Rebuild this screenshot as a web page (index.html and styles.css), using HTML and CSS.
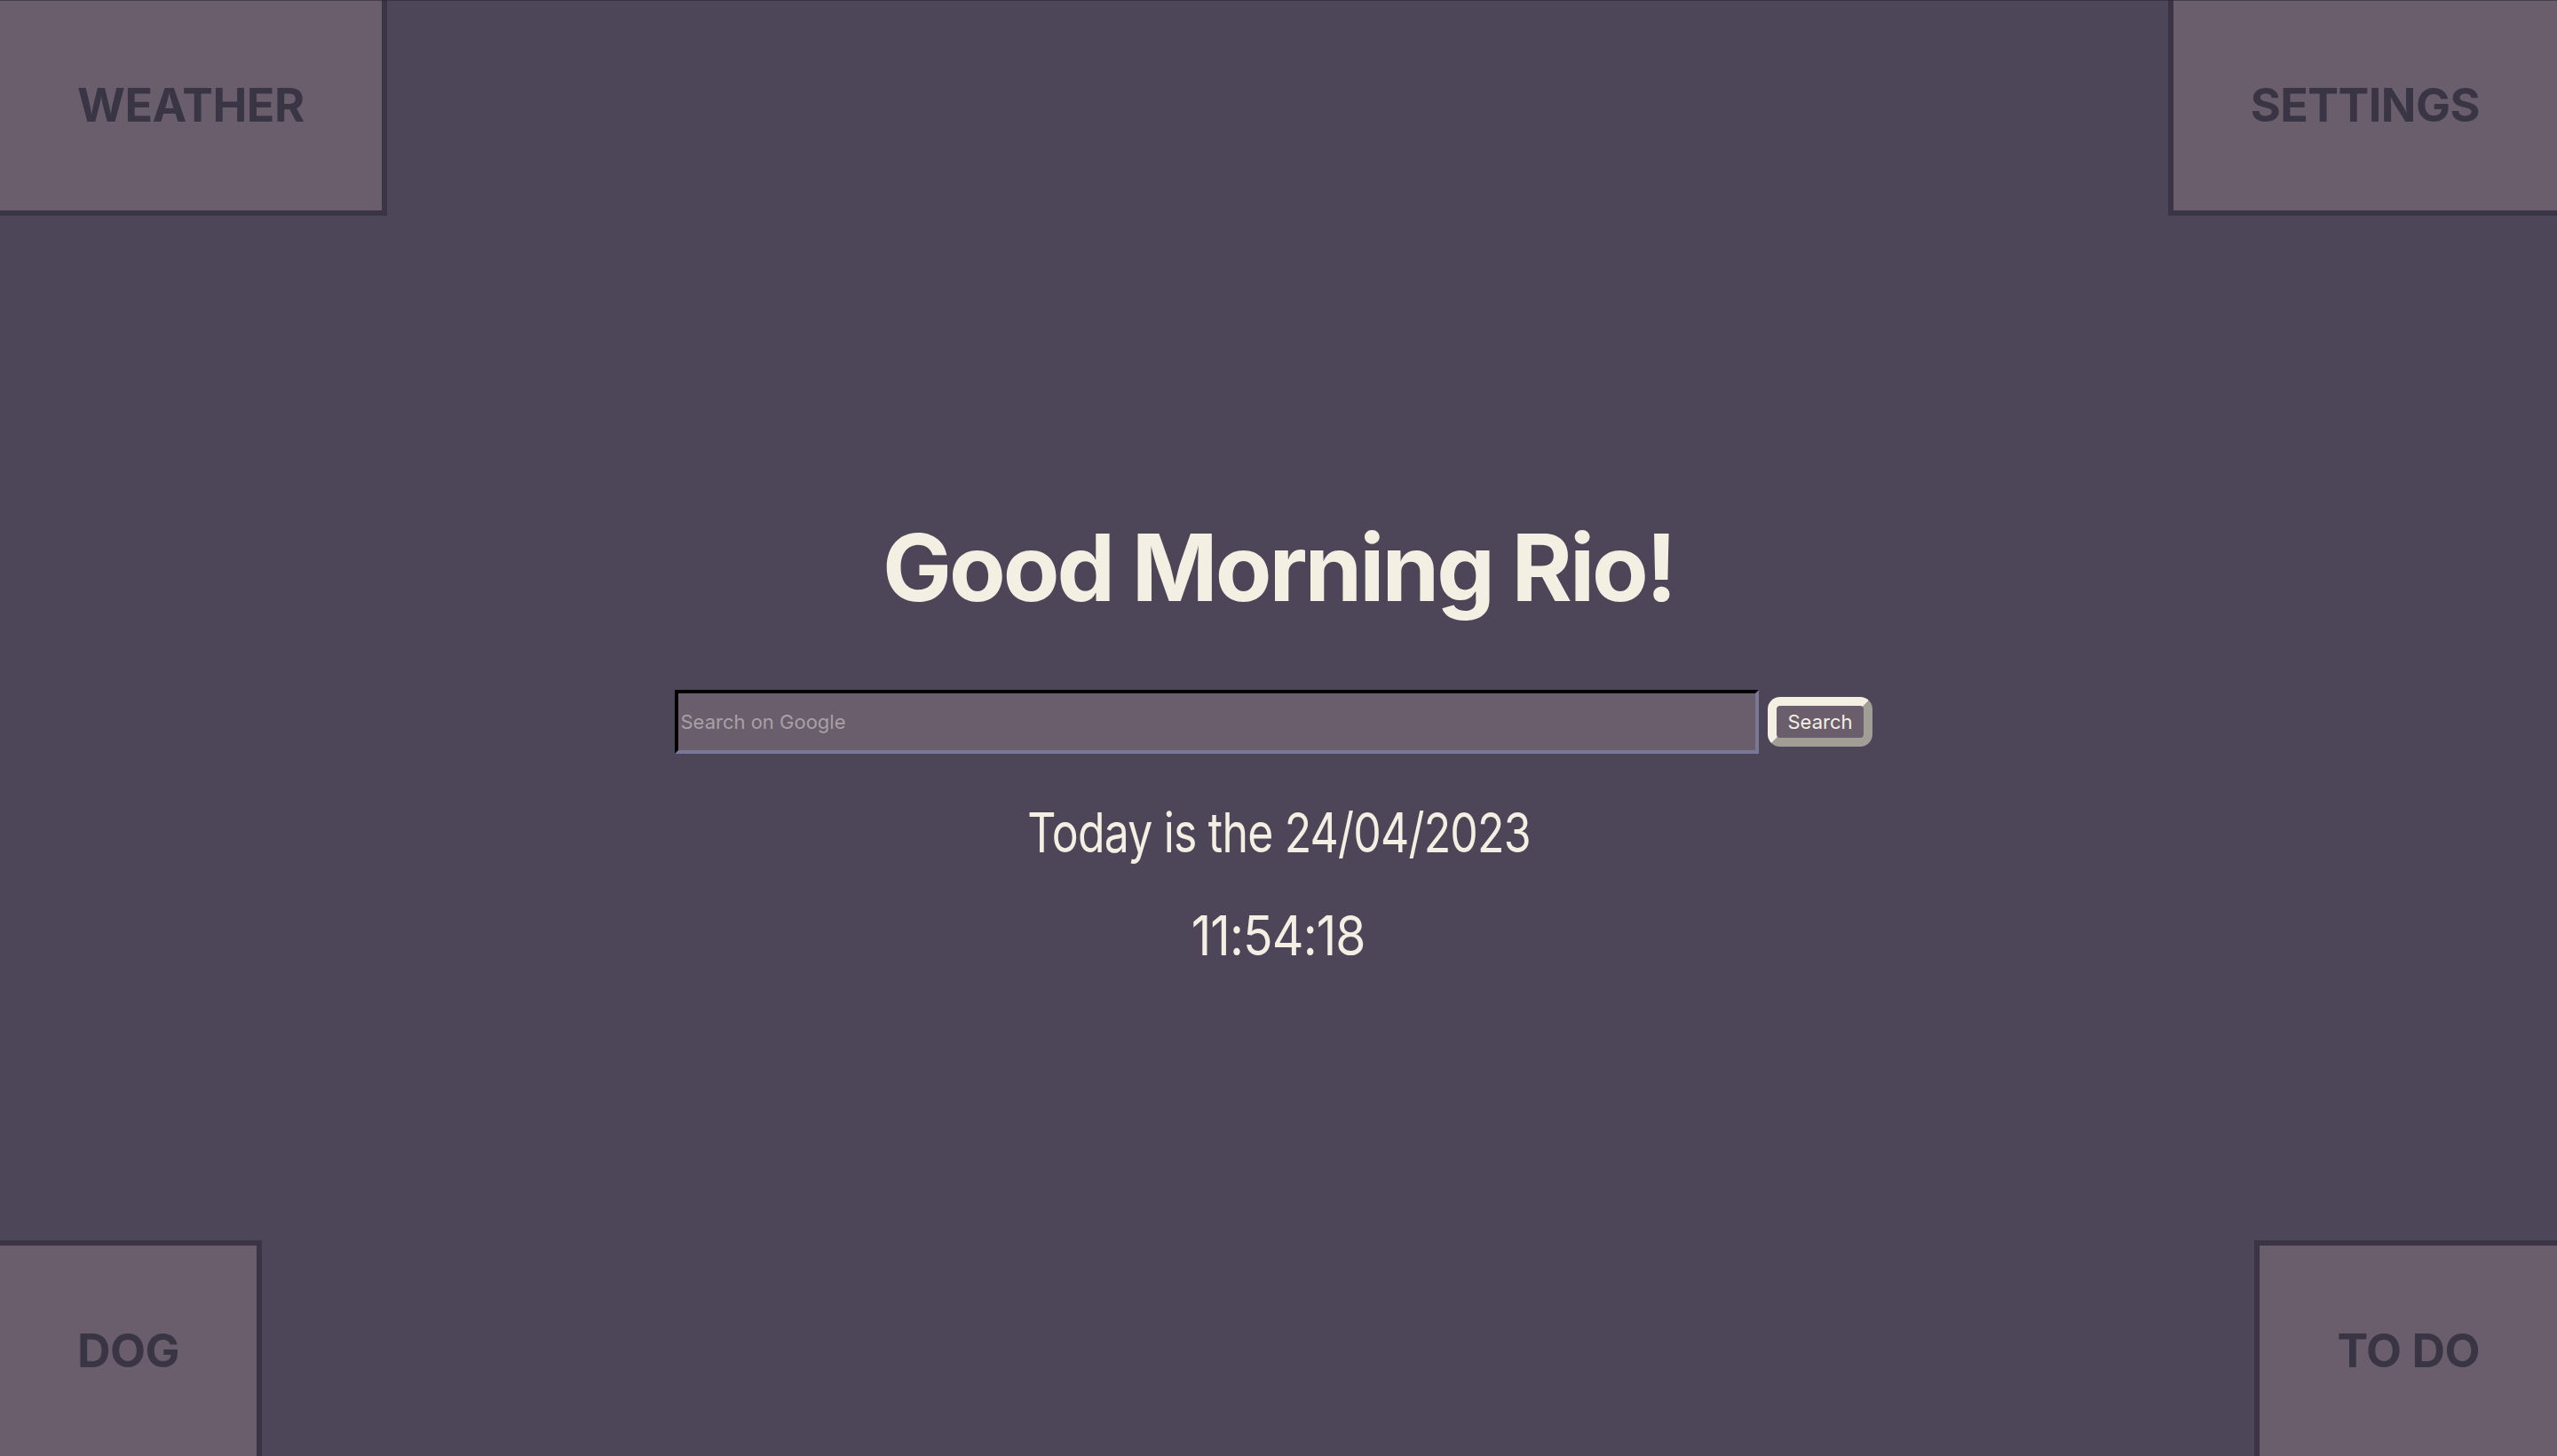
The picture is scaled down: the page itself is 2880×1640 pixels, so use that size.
FILE: index.html
```html
<!DOCTYPE html>
<html lang="en">
<head>
<meta charset="utf-8">
<title>Dashboard</title>
<link rel="stylesheet" href="styles.css">
</head>
<body>
<div class="page">
  <header class="row row-top">
    <div class="tile tile-tl">WEATHER</div>
    <div class="tile tile-tr">SETTINGS</div>
  </header>
  <main class="center">
    <h1 class="greeting">Good Morning Rio!</h1>
    <form class="search">
      <input class="search-input" type="text" placeholder="Search on Google">
      <button class="search-btn" type="button">Search</button>
    </form>
    <p class="date">Today is the 24/04/2023</p>
    <p class="time">11:54:18</p>
  </main>
  <footer class="row row-bottom">
    <div class="tile tile-bl">DOG</div>
    <div class="tile tile-br">TO DO</div>
  </footer>
</div>
</body>
</html>
```
FILE: styles.css
```css
html, body {
  margin: 0;
  padding: 0;
}
body {
  background: #4d4558;
  font-family: Inter, "Noto Sans", sans-serif;
  overflow: hidden;
}
body::before {
  content: "";
  position: fixed;
  left: 0;
  right: 0;
  top: 0;
  height: 1px;
  background: rgba(40, 34, 50, 0.55);
  z-index: 2;
}
.page {
  height: 100vh;
  display: grid;
  grid-template-rows: auto 1fr auto;
}
.row {
  display: flex;
  justify-content: space-between;
}
.row-top { align-items: flex-start; }
.row-bottom { align-items: flex-end; }
.tile {
  background: #6a5e6c;
  border: 6px solid #393545;
  color: #393545;
  font-weight: 700;
  font-size: 52px;
  line-height: 63px;
  letter-spacing: -0.5px;
  padding: 87px;
  white-space: nowrap;
}
.tile-tl { margin: -6px 0 0 -6px; }
.tile-tr { margin: -6px -6px 0 0; }
.tile-bl { margin: 0 0 -6px -6px; }
.tile-br { margin: 0 -6px -6px 0; }

.center {
  display: flex;
  flex-direction: column;
  align-items: center;
  padding-top: 333px;
  color: #f3efe3;
}
.greeting {
  margin: 0;
  font-size: 104px;
  font-weight: 700;
  line-height: 126px;
  letter-spacing: -3px;
}
.search {
  display: flex;
  align-items: center;
  gap: 10px;
  margin: 75px 11px 0 0;
}
.search-input {
  box-sizing: border-box;
  width: 1221px;
  height: 72px;
  margin: 0;
  padding: 0 2px;
  background: #6a5e6c;
  border: 4px solid;
  border-color: #000 #7b7799 #7b7799 #000;
  font-family: Inter, "Noto Sans", sans-serif;
  font-size: 22px;
  color: #f3efe3;
  outline: none;
}
.search-input::placeholder {
  color: #a8a0a6;
}
.search-btn {
  box-sizing: border-box;
  height: 56px;
  margin: 0;
  padding: 0 12px;
  background: #6a5e6c;
  border: 10px solid;
  border-color: #f3efe3 #a19f95 #a19f95 #f3efe3;
  border-radius: 14px;
  color: #f3efe3;
  font-family: Inter, "Noto Sans", sans-serif;
  font-size: 22px;
  line-height: 36px;
}
.date, .time {
  margin: 0;
  font-family: Inter, "Noto Sans", sans-serif;
  font-size: 62px;
  font-weight: 400;
  line-height: 75px;
  letter-spacing: -1px;
  white-space: nowrap;
}
.date {
  margin-top: 51px;
  transform: scaleX(0.806);
}
.time {
  margin-top: 41px;
  transform: scaleX(0.893);
}
```
